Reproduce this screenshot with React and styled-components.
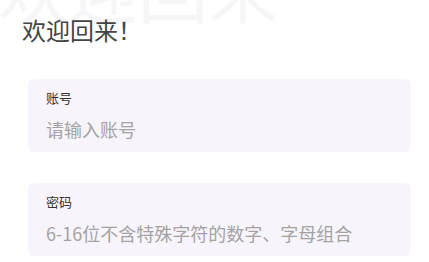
import styled, { createGlobalStyle } from "styled-components";

const GlobalStyle = createGlobalStyle`
  html, body {
    margin: 0;
    padding: 0;
    background: #ffffff;
    font-family: "Noto Sans CJK SC", "Noto Sans", sans-serif;
  }
`;

const Page = styled.div`
  position: relative;
  overflow: hidden;
  width: 429px;
  height: 262px;
  padding: 14px 18px 0 22px;
  box-sizing: border-box;
`;

// big faded heading behind the title
const Watermark = styled.div`
  position: absolute;
  left: -2px;
  top: -47px;
  font-size: 70px;
  line-height: 1;
  color: #f6f6f8;
  white-space: nowrap;
  pointer-events: none;
`;

const Title = styled.h1`
  position: relative;
  margin: 0;
  font-size: 24px;
  font-weight: 400;
  line-height: 32px;
  color: #444444;
`;

const Form = styled.div`
  display: flex;
  flex-direction: column;
  gap: 31px;
  margin: 33px 0 0 6px;
`;

const Field = styled.label`
  display: flex;
  flex-direction: column;
  gap: 9px;
  height: 73px;
  box-sizing: border-box;
  padding: 10px 18px 0;
  border-radius: 6px;
  background: #f7f5fb;
`;

const Label = styled.span`
  font-size: 13px;
  line-height: 18px;
  color: #333333;
`;

const Input = styled.input`
  border: none;
  outline: none;
  background: transparent;
  padding: 0;
  font-family: inherit;
  font-size: 18px;
  line-height: 26px;
  height: 26px;
  color: #333333;

  &::placeholder {
    color: #a3a3a3;
  }
`;

const fields = [
  { label: "账号", placeholder: "请输入账号", type: "text" },
  { label: "密码", placeholder: "6-16位不含特殊字符的数字、字母组合", type: "password" },
];

export default function App() {
  return (
    <>
      <GlobalStyle />
      <Page>
        <Watermark>欢迎回来</Watermark>
        <Title>欢迎回来！</Title>
        <Form>
          {fields.map((f) => (
            <Field key={f.label}>
              <Label>{f.label}</Label>
              <Input type={f.type} placeholder={f.placeholder} />
            </Field>
          ))}
        </Form>
      </Page>
    </>
  );
}
